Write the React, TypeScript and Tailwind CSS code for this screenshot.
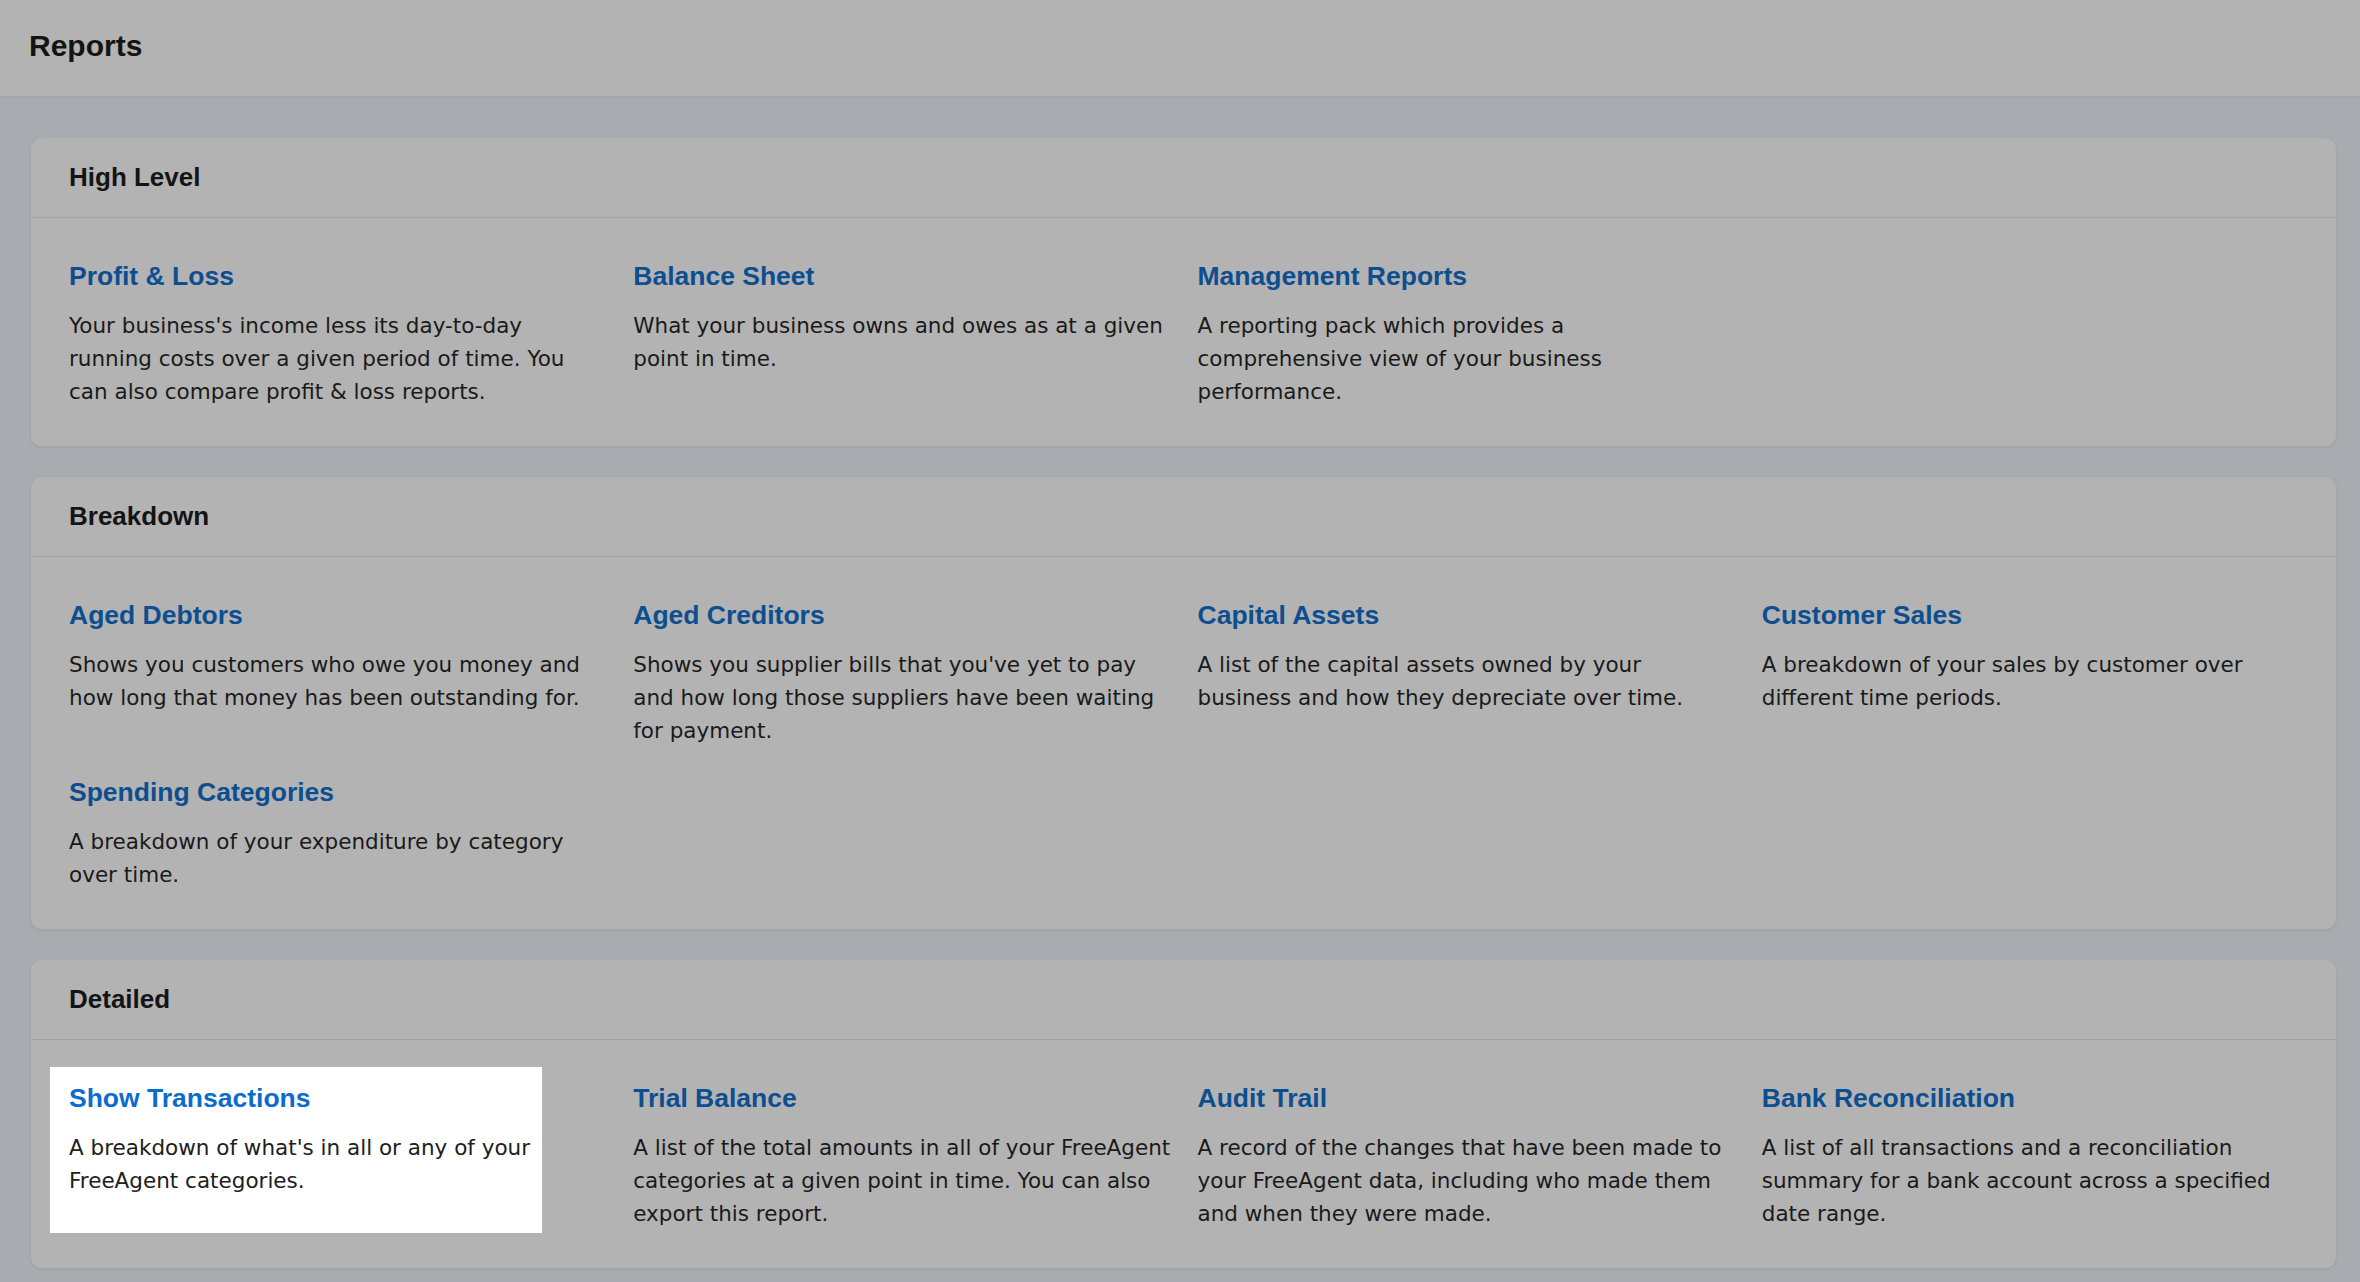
import React from 'react';

type Report = {
  title: string;
  lines: string[];
  highlight?: boolean;
};

type Section = {
  name: string;
  reports: Report[];
};

const sections: Section[] = [
  {
    name: 'High Level',
    reports: [
      {
        title: 'Profit & Loss',
        lines: [
          "Your business's income less its day-to-day",
          'running costs over a given period of time. You',
          'can also compare profit & loss reports.',
        ],
      },
      {
        title: 'Balance Sheet',
        lines: ['What your business owns and owes as at a given', 'point in time.'],
      },
      {
        title: 'Management Reports',
        lines: ['A reporting pack which provides a', 'comprehensive view of your business', 'performance.'],
      },
    ],
  },
  {
    name: 'Breakdown',
    reports: [
      {
        title: 'Aged Debtors',
        lines: ['Shows you customers who owe you money and', 'how long that money has been outstanding for.'],
      },
      {
        title: 'Aged Creditors',
        lines: [
          "Shows you supplier bills that you've yet to pay",
          'and how long those suppliers have been waiting',
          'for payment.',
        ],
      },
      {
        title: 'Capital Assets',
        lines: ['A list of the capital assets owned by your', 'business and how they depreciate over time.'],
      },
      {
        title: 'Customer Sales',
        lines: ['A breakdown of your sales by customer over', 'different time periods.'],
      },
      {
        title: 'Spending Categories',
        lines: ['A breakdown of your expenditure by category', 'over time.'],
      },
    ],
  },
  {
    name: 'Detailed',
    reports: [
      {
        title: 'Show Transactions',
        lines: ["A breakdown of what's in all or any of your", 'FreeAgent categories.'],
        highlight: true,
      },
      {
        title: 'Trial Balance',
        lines: [
          'A list of the total amounts in all of your FreeAgent',
          'categories at a given point in time. You can also',
          'export this report.',
        ],
      },
      {
        title: 'Audit Trail',
        lines: [
          'A record of the changes that have been made to',
          'your FreeAgent data, including who made them',
          'and when they were made.',
        ],
      },
      {
        title: 'Bank Reconciliation',
        lines: [
          'A list of all transactions and a reconciliation',
          'summary for a bank account across a specified',
          'date range.',
        ],
      },
    ],
  },
];

const ReportItem = ({ report }: { report: Report }) => (
  <div className="relative">
    {/* spotlight box for the tour step */}
    {report.highlight && (
      <div className="absolute -left-[19px] -top-[15px] w-[492px] h-[166px] bg-white" />
    )}
    <div className="relative">
      <a
        href="#"
        className={`block font-['Liberation_Sans',Arial,sans-serif] font-bold text-[26.5px] leading-[33px] ${
          report.highlight ? 'text-[#0b6cce]' : 'text-[#0d4e90]'
        }`}
      >
        {report.title}
      </a>
      <p
        className={`mt-[16px] text-[21.5px] leading-[33px] whitespace-nowrap ${
          report.highlight ? 'text-[#202020]' : 'text-[#1a1a1a]'
        }`}
      >
        {report.lines.map((line, i) => (
          <React.Fragment key={i}>
            {line}
            {i < report.lines.length - 1 && <br />}
          </React.Fragment>
        ))}
      </p>
    </div>
  </div>
);

export default function App() {
  return (
    <div className="min-h-screen bg-[#a8abb0] font-['DejaVu_Sans',sans-serif]">
      {/* Page header */}
      <header className="h-[97px] bg-[#b3b3b3] border-b border-[#a2a4a7] flex items-center pl-[29px] pb-[6px]">
        <h1 className="font-['Liberation_Sans',Arial,sans-serif] font-bold text-[30px] text-[#141414]">
          Reports
        </h1>
      </header>

      <main className="pl-[30px] pr-[23px] pt-[40px] pb-[16px] flex flex-col gap-[29px]">
        {sections.map((section) => (
          <section
            key={section.name}
            className="rounded-[12px] bg-[#b3b3b3] border border-[#a5a7aa] shadow-[0_1px_2px_rgba(0,0,0,0.06)]"
          >
            <div className="h-[80px] border-b border-[#a3a3a3] flex items-center pl-[38px]">
              <h2 className="font-['Liberation_Sans',Arial,sans-serif] font-bold text-[26px] text-[#141414]">
                {section.name}
              </h2>
            </div>
            <div className="px-[38px] pt-[42px] pb-[38px] grid grid-cols-4 gap-x-[28px] gap-y-[29px]">
              {section.reports.map((report) => (
                <ReportItem key={report.title} report={report} />
              ))}
            </div>
          </section>
        ))}
      </main>
    </div>
  );
}
